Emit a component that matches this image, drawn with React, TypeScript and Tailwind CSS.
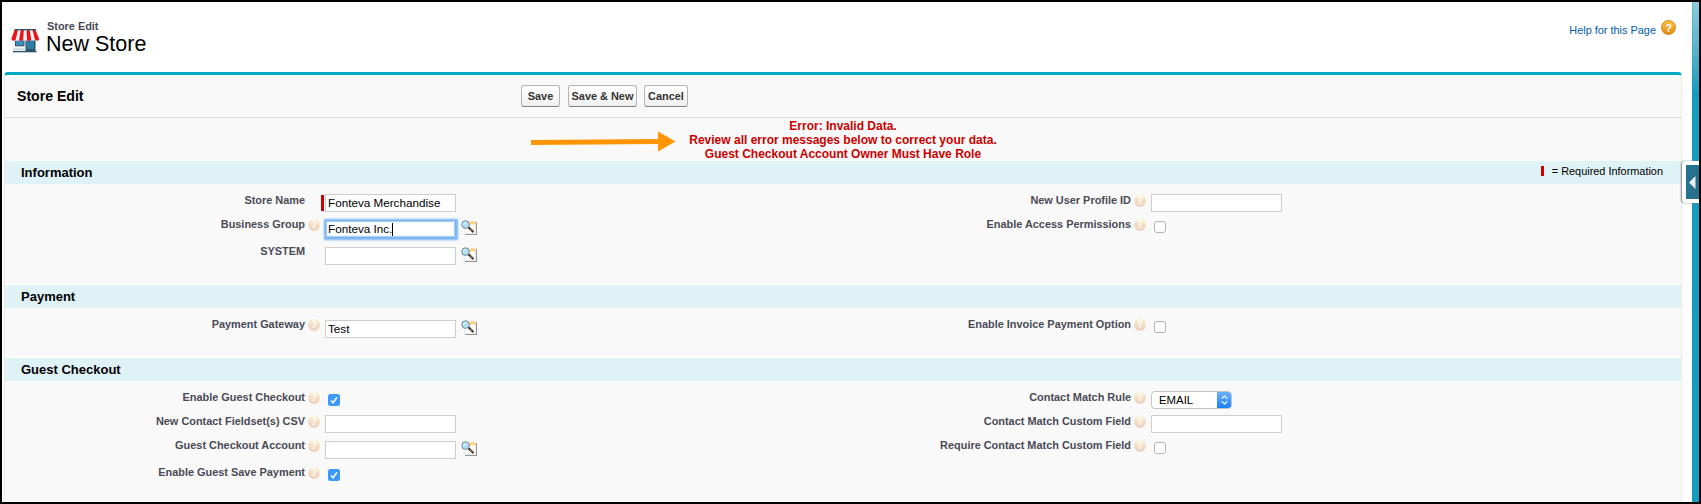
import type { ReactNode } from "react";

function StoreIcon() {
  return (
    <svg width="28" height="26" viewBox="0 0 28 26" className="block">
      <rect x="3" y="11" width="21" height="9" fill="#f6f9fa" />
      <rect x="4.5" y="11" width="8.5" height="6.8" fill="#3c8dbc" stroke="#2b5468" strokeWidth="1" />
      <rect x="14.5" y="10" width="10" height="13" fill="#2b5468" />
      <rect x="15.5" y="12" width="7.5" height="9" fill="#2f7ca6" />
      <rect x="2" y="20.6" width="12.5" height="1" fill="#a8b8c0" />
      <rect x="2" y="22.9" width="23.5" height="1.4" fill="#2b5468" />
      <path d="M4 2H24.5L28 10.5Q27 13.2 24.5 12.5L20 12.5L14 12.5L8.5 12.5L3 12.8Q.5 12.5 .5 10.5Z" fill="#f6f4f4" />
      <path d="M3.500 2H7L4.6 12Q2 13.5.5 11.8V10.5Z" fill="#ea151b" />
      <path d="M9.700 2H12.800L12.2 12Q10 13.700 8.000 12Z" fill="#ea151b" />
      <path d="M15.6 2H18.700L20.300 12Q18 13.700 16 12Z" fill="#ea151b" />
      <path d="M21.500 2H24.500L28 10.500V11.800Q26 13.700 24 12Z" fill="#ea151b" />
      <rect x="3.5" y="1" width="21.5" height="1.3" fill="#2b5468" />
    </svg>
  );
}

function LookupIcon() {
  return (
    <svg width="17" height="16" viewBox="0 0 17 16" className="block shrink-0">
      <path d="M4 2H16V15H4Z" fill="#8f8f8f" />
      <path d="M3 1H15V14H3Z" fill="#fff" />
      <path d="M3.300 8V13.700H14.700V1.300H9" fill="none" stroke="#d9d9d9" strokeWidth=".6" />
      <rect x="8.500" y="1.500" width="6" height="3" fill="#ffd27a" />
      <path d="M8 7.800L11.800 11.500" stroke="#33261a" strokeWidth="2.200" strokeLinecap="round" />
      <path d="M8.800 8.500L11.500 11.100" stroke="#d09a52" strokeWidth=".9" />
      <circle cx="4.600" cy="4.600" r="3.800" fill="#b2dff5" stroke="#647c8c" strokeWidth=".9" />
      <path d="M2.600 4.600A2.200 2.200 0 0 1 4.800 2.500" stroke="#e9f8ff" strokeWidth="1.200" fill="none" />
    </svg>
  );
}

function HelpDot({ hidden }: { hidden?: boolean }) {
  if (hidden) return <span className="mx-[3px] w-3 shrink-0" />;
  return (
    <span className="mx-[3px] mt-[3px] flex h-3 w-3 shrink-0 items-center justify-center rounded-full bg-linear-to-b from-[#f8ecc9] to-[#edd0c0] text-[10px] leading-3 font-bold text-white">
      ?
    </span>
  );
}

function TextBox({ value, className = "mt-1" }: { value?: string; className?: string }) {
  return (
    <span className={`flex h-[18px] w-[131px] items-center border border-[#cdcdcd] bg-white pl-[2px] text-[11.7px] leading-4 whitespace-pre text-black ${className}`}>
      {value}
    </span>
  );
}

function Lookup({ children }: { children: ReactNode }) {
  return (
    <span className="flex items-start">
      {children}
      <span className="mt-1 ml-[5px]">
        <LookupIcon />
      </span>
    </span>
  );
}

function Check({ checked }: { checked?: boolean }) {
  if (!checked) return <span className="mt-[5px] ml-[3px] h-3 w-3 rounded-[3px] border border-[#b3b3b3] bg-white" />;
  return (
    <span className="mt-[5px] ml-[3px] h-3 w-3 rounded-[2.5px] bg-[#3b99fc]">
      <svg width="12" height="12" viewBox="0 0 12 12" className="block">
        <path d="M3 6.4L5.1 8.7L9 3.2" fill="none" stroke="#fff" strokeWidth="1.5" />
      </svg>
    </span>
  );
}

function Row({ label, help = true, tall, wide, children }: { label: string; help?: boolean; tall?: boolean; wide?: boolean; children: ReactNode }) {
  return (
    <div className={`flex items-start ${tall ? "h-[27px]" : "h-6"}`}>
      <span className={`text-right text-[10.92px] leading-4 font-bold whitespace-nowrap text-[#4a4a56] ${wide ? "w-[286px]" : "w-[300px]"}`}>{label}</span>
      <HelpDot hidden={!help} />
      <span className="ml-[2px] flex items-start">{children}</span>
    </div>
  );
}

function Section({ title, height, extra, left, right }: { title: string; height: string; extra?: ReactNode; left: ReactNode; right: ReactNode }) {
  return (
    <section className={height}>
      <div className="flex h-[23px] items-center justify-between bg-[#dff3f7] pr-[18px] pl-4">
        <h3 className="text-[13px] leading-5 font-bold text-black">{title}</h3>
        {extra}
      </div>
      <div className="flex pt-2">
        <div className="w-[840px]">{left}</div>
        <div className="flex-1">{right}</div>
      </div>
    </section>
  );
}

function Button({ children, className }: { children: ReactNode; className: string }) {
  return (
    <button className={`flex h-[22px] items-center justify-center rounded-[3px] border border-[#b5b5b5] border-b-[#7f7f7f] bg-linear-to-b from-white to-[#f0f0f0] text-[10.92px] leading-4 font-bold whitespace-nowrap text-[#333] ${className}`}>
      {children}
    </button>
  );
}

export default function App() {
  return (
    <div className="relative flex h-[504px] w-[1701px] overflow-hidden border-2 border-black bg-white font-['Liberation_Sans',Arial,sans-serif]">
      <div className="flex w-[1690px] shrink-0 flex-col">
        <header className="flex h-[70px] shrink-0 items-start pl-[9px]">
          <div className="mt-[26px]">
            <StoreIcon />
          </div>
          <div className="ml-2 pt-[17px]">
            <div className="text-[10.92px] leading-[14px] font-bold text-[#4a4a56]">Store Edit</div>
            <h1 className="-ml-px text-[21.5px] leading-[22px] text-black">New Store</h1>
          </div>
          <a className="mt-[18px] mr-[16px] ml-auto flex items-center text-[10.92px] leading-5 text-[#015ba7]">
            Help for this Page
            <span className="mb-[5px] ml-[5px] flex h-[15px] w-[15px] items-center justify-center rounded-full border border-[#cf8a1c] bg-linear-to-b from-[#fbc03c] to-[#e98a08] text-[11px] leading-3 font-bold text-white">
              ?
            </span>
          </a>
        </header>

        <main className="ml-[2px] w-[1678px] flex-1 rounded-t-[4px] border-x border-t-[3px] border-x-[#eaeaea] border-t-[#00a9c4] bg-[#f9f9f9]">
          <div className="flex h-[43px] items-start border-b border-[#dbdbdb] pt-[10px]">
            <h2 className="w-[516px] pt-[1px] pl-[12px] text-[14.1px] leading-5 font-bold text-black">Store Edit</h2>
            <Button className="w-[39px]">Save</Button>
            <Button className="ml-2 w-[69px]">Save &amp; New</Button>
            <Button className="ml-[7px] w-[44px]">Cancel</Button>
          </div>
          <div className="h-[43px] pt-[1px] text-center text-[12px] leading-[14px] font-bold text-[#cc0000]">
            <p>Error: Invalid Data.</p>
            <p>Review all error messages below to correct your data.</p>
            <p>Guest Checkout Account Owner Must Have Role</p>
          </div>

          <Section
            title="Information"
            height="h-[124px] border-b border-white"
            extra={
              <span className="flex items-center pb-[3px] text-[10.92px] leading-4 text-black">
                <span className="mr-2 h-[10px] w-[3px] bg-[#cc0000]" />= Required Information
              </span>
            }
            left={
              <>
                <Row label="Store Name" help={false}>
                  <span className="mt-[3px] -ml-1 h-4 w-[3px] bg-[#cc0000]" />
                  <TextBox value="Fonteva Merchandise" className="mt-[2px] ml-px" />
                </Row>
                <Row label="Business Group" tall>
                  <Lookup>
                    <span className="mt-1 flex h-[18px] w-[131px] items-center border border-[#7db5f0] bg-white pl-[2px] text-[11.7px] leading-4 text-black shadow-[0_0_2px_1.5px_#74b3f3,inset_0_0_1px_1px_#9ccafa]">
                      Fonteva Inc.
                      <span className="h-[13px] w-px bg-black" />
                    </span>
                  </Lookup>
                </Row>
                <Row label="SYSTEM" help={false}>
                  <Lookup>
                    <TextBox />
                  </Lookup>
                </Row>
              </>
            }
            right={
              <>
                <Row label="New User Profile ID" wide>
                  <TextBox className="mt-[2px]" />
                </Row>
                <Row label="Enable Access Permissions" wide>
                  <Check />
                </Row>
              </>
            }
          />

          <Section
            title="Payment"
            height="h-[73px] border-b border-white"
            left={
              <Row label="Payment Gateway">
                <Lookup>
                  <TextBox value="Test" />
                </Lookup>
              </Row>
            }
            right={
              <Row label="Enable Invoice Payment Option" wide>
                <Check />
              </Row>
            }
          />

          <Section
            title="Guest Checkout"
            height="h-[144px]"
            left={
              <>
                <Row label="Enable Guest Checkout">
                  <Check checked />
                </Row>
                <Row label="New Contact Fieldset(s) CSV">
                  <TextBox className="mt-[2px]" />
                </Row>
                <Row label="Guest Checkout Account" tall>
                  <Lookup>
                    <TextBox />
                  </Lookup>
                </Row>
                <Row label="Enable Guest Save Payment">
                  <Check checked />
                </Row>
              </>
            }
            right={
              <>
                <Row label="Contact Match Rule" wide>
                  <span className="mt-[2px] flex h-[18px] w-[81px] items-center overflow-hidden rounded-[4px] border border-[#c2c2c2] bg-white pl-[7px] text-[11.4px] leading-4 text-black">
                    EMAIL
                    <span className="-mr-px ml-auto flex h-[18px] w-[15px] items-center justify-center bg-linear-to-b from-[#6cb3fa] to-[#0a7dfc]">
                      <svg width="9" height="12" viewBox="0 0 9 12">
                        <path d="M1.8 4.6L4.5 2L7.2 4.6M1.8 7.4L4.5 10L7.2 7.4" fill="none" stroke="#fff" strokeWidth="1.1" />
                      </svg>
                    </span>
                  </span>
                </Row>
                <Row label="Contact Match Custom Field" wide>
                  <TextBox className="mt-[2px]" />
                </Row>
                <Row label="Require Contact Match Custom Field" wide>
                  <Check />
                </Row>
              </>
            }
          />
        </main>
      </div>

      <aside className="w-[7px] bg-linear-to-b from-[#8ccbdc] to-[#179bbf] to-[90px] shadow-[inset_1px_0_0_#1289ab33]" />
      <div className="absolute top-[159px] right-0 flex h-[42px] w-[17px] rounded-l-[4px] bg-white pt-1 pl-1 shadow-[-1px_0_2px_#888]">
        <div className="flex h-[34px] w-[13px] items-center justify-center bg-[#25728e]">
          <svg width="7" height="13" viewBox="0 0 7 13">
            <path d="M6.5 0V13L0 6.5Z" fill="#e8eef0" />
          </svg>
        </div>
      </div>

      <svg width="145" height="21" viewBox="0 0 145 21" className="absolute top-[129px] left-[529px]">
        <path d="M0 9L127 8V.5L144.5 10.5L127 20.5V13L0 14Z" fill="#ff9500" />
      </svg>
    </div>
  );
}
